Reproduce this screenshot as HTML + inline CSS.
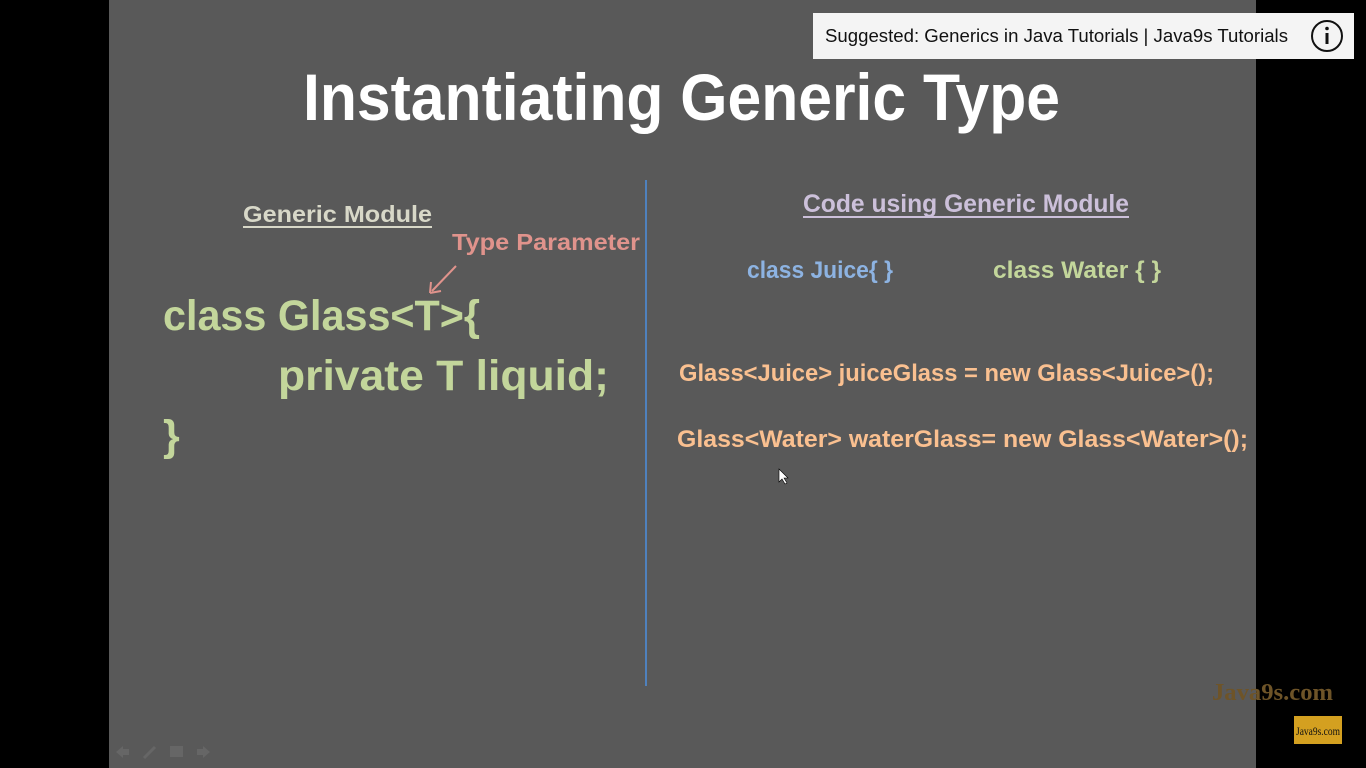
<!DOCTYPE html>
<html><head><meta charset="utf-8"><style>
html,body{margin:0;padding:0;background:#000;width:1366px;height:768px;overflow:hidden}
</style></head><body>
<svg width="1366" height="768" xmlns="http://www.w3.org/2000/svg" style="display:block">
<rect width="1366" height="768" fill="#000"/>
<rect x="109" y="0" width="1147" height="768" fill="#595959"/>
<g font-family="Liberation Sans, sans-serif" font-weight="bold">
<text x="303" y="120" font-size="66" fill="#fff" textLength="757" lengthAdjust="spacingAndGlyphs">Instantiating Generic Type</text>
<text x="243" y="222" font-size="23" fill="#d8d8c8" textLength="189" lengthAdjust="spacingAndGlyphs">Generic Module</text>
<rect x="243" y="226" width="189" height="2" fill="#d8d8c8"/>
<text x="452" y="250" font-size="23" fill="#e0938c" textLength="188" lengthAdjust="spacingAndGlyphs">Type Parameter</text>
<line x1="456" y1="266" x2="432" y2="291" stroke="#e0938c" stroke-width="2"/>
<path d="M430 293 L431 282 M430 293 L441 291" stroke="#e0938c" stroke-width="2" fill="none"/>
<text x="163" y="330" font-size="43" fill="#c3d69b" textLength="317" lengthAdjust="spacingAndGlyphs">class Glass&lt;T&gt;{</text>
<text x="278" y="390" font-size="43" fill="#c3d69b" textLength="331" lengthAdjust="spacingAndGlyphs">private T liquid;</text>
<text x="163" y="450" font-size="43" fill="#c3d69b">}</text>
<rect x="645" y="180" width="2" height="506" fill="#4f81bd"/>
<text x="803" y="212" font-size="25" fill="#ccc0da" textLength="326" lengthAdjust="spacingAndGlyphs">Code using Generic Module</text>
<rect x="803" y="216" width="326" height="2" fill="#ccc0da"/>
<text x="747" y="278" font-size="24" fill="#8db3e2" textLength="146" lengthAdjust="spacingAndGlyphs">class Juice{ }</text>
<text x="993" y="278" font-size="24" fill="#c3d69b" textLength="168" lengthAdjust="spacingAndGlyphs">class Water { }</text>
<text x="679" y="381" font-size="24" fill="#fac090" textLength="535" lengthAdjust="spacingAndGlyphs">Glass&lt;Juice&gt; juiceGlass = new Glass&lt;Juice&gt;();</text>
<text x="677" y="447" font-size="24" fill="#fac090" textLength="571" lengthAdjust="spacingAndGlyphs">Glass&lt;Water&gt; waterGlass= new Glass&lt;Water&gt;();</text>
</g>
<path d="M779 469 L779 482 L782 479 L785 484 L787 483 L784 478 L788 478 Z" fill="#fff" stroke="#000" stroke-width="0.6"/>
<text x="1212" y="700" font-family="Liberation Serif, serif" font-weight="bold" font-size="24" fill="#6e5428" textLength="121" lengthAdjust="spacingAndGlyphs">Java9s.com</text>
<rect x="1294" y="716" width="48" height="28" fill="#d4a020"/>
<text x="1296" y="735" font-family="Liberation Serif, serif" font-size="12" fill="#111" textLength="44" lengthAdjust="spacingAndGlyphs">Java9s.com</text>
<g fill="#666" stroke="#666">
<path d="M116 752 L123 746 L123 749 L129 749 L129 755 L123 755 L123 758 Z" stroke="none"/>
<line x1="144" y1="758" x2="155" y2="747" stroke-width="3"/>
<rect x="170" y="746" width="13" height="11" stroke="none"/>
<path d="M210 752 L203 746 L203 749 L197 749 L197 755 L203 755 L203 758 Z" stroke="none"/>
</g>
<rect x="813" y="13" width="541" height="46" fill="#f4f4f4"/>
<text x="825" y="42" font-family="Liberation Sans, sans-serif" font-size="18" fill="#111" textLength="463" lengthAdjust="spacingAndGlyphs">Suggested: Generics in Java Tutorials | Java9s Tutorials</text>
<circle cx="1327" cy="36" r="15" fill="none" stroke="#111" stroke-width="2"/>
<rect x="1325.5" y="33" width="3" height="11" fill="#111"/>
<circle cx="1327" cy="28.5" r="1.8" fill="#111"/>
</svg>
</body></html>
